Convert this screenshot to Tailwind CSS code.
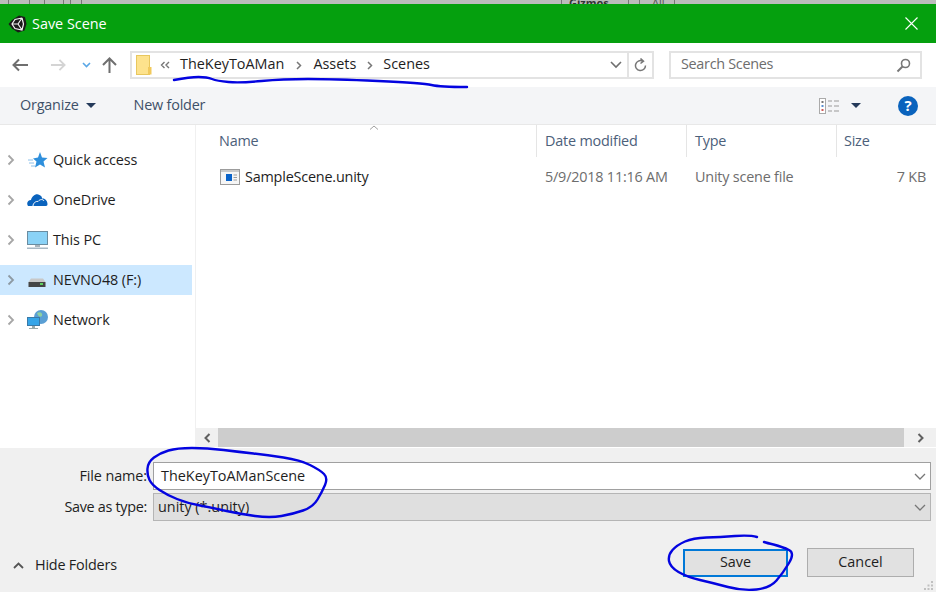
<!DOCTYPE html>
<html lang="en">
<head>
  <meta charset="UTF-8" />
  <title>Save Scene</title>
  <script src="https://cdn.jsdelivr.net/npm/@tailwindcss/browser@4"></script>
</head>
<body class="bg-white">
  <div class="relative w-[936px] h-[592px] overflow-hidden flex flex-col font-['Open_Sans',sans-serif] text-[14.4px] text-[#1e1e1e]">

    <!-- editor window peeking out above the dialog -->
    <div class="h-[4px] bg-[#bcbcbc] flex items-start overflow-hidden text-[11px] leading-[5px]">
      <div class="ml-[8px] w-[22px] h-[4px] border-x border-[#777]"></div>
      <div class="ml-[14px] w-[20px] h-[4px] border-x border-[#777]"></div>
      <div class="ml-[6px] w-[12px] h-[4px] border-x border-[#777]"></div>
      <div class="ml-[479px] w-[68px] h-[4px] border-x border-[#777] pl-[7px] font-bold text-[#333]">Gizmos</div>
      <div class="ml-[10px] w-[36px] h-[4px] border-x border-[#777] pl-[12px] text-[#555]">All</div>
    </div>

    <!-- title bar -->
    <div class="h-[39px] bg-[#05a00e] flex items-center pl-[8px] pr-[18px] text-white">
      <svg class="w-[19px] h-[18px]" viewBox="0 0 19 18">
        <path d="M11 0.5 L17 2 L18.5 9 L16.5 15.5 L10 17.5 L4 13.5 L0.5 9 L4 5 Z" fill="#1a1a1a"/>
        <path d="M4 9 H10 L14 3 M10 9 L14 15 M14 3 L15.5 9 L14 15 L7 13.5 L4 9 L7 4.5 L14 3" fill="none" stroke="#f2f2f2" stroke-width="1.2"/>
      </svg>
      <span class="ml-[5px]">Save Scene</span>
      <svg class="ml-auto w-[13px] h-[13px]" viewBox="0 0 13 13"><path d="M0.5 0.5 L12.5 12.5 M12.5 0.5 L0.5 12.5" stroke="#fff" stroke-width="1.1"/></svg>
    </div>

    <!-- address row -->
    <div class="h-[44px] bg-white flex items-center pl-[12px]">
      <svg class="w-[17px] h-[14px]" viewBox="0 0 17 14"><path d="M16 7 H2 M7 1.5 L1.5 7 L7 12.5" fill="none" stroke="#6f6f6f" stroke-width="2"/></svg>
      <svg class="ml-[21px] w-[16px] h-[14px]" viewBox="0 0 17 14"><path d="M1 7 H15 M10 1.5 L15.5 7 L10 12.5" fill="none" stroke="#d4d4d4" stroke-width="2"/></svg>
      <svg class="ml-[16px] w-[9px] h-[6px]" viewBox="0 0 9 6"><path d="M1 1 L4.5 4.5 L8 1" fill="none" stroke="#5aa7e6" stroke-width="1.6"/></svg>
      <svg class="ml-[11px] w-[15px] h-[16px]" viewBox="0 0 15 16"><path d="M7.5 16 V2 M1 8 L7.5 1.5 L14 8" fill="none" stroke="#6f6f6f" stroke-width="2"/></svg>
      <div class="ml-[13px] w-[524px] h-[28px] border-2 border-[#e3e3e3] flex items-center">
        <svg class="ml-[4px] w-[16px] h-[20px] shrink-0" viewBox="0 0 16 20">
          <rect x="0.5" y="0.5" width="13" height="19" fill="#fde28c" stroke="#e8c75e"/>
          <rect x="12" y="12" width="3.5" height="7.5" fill="#f1c95c"/>
        </svg>
        <svg class="ml-[8px] w-[10px] h-[8px]" viewBox="0 0 10 8"><path d="M4.5 1 L1.5 4 L4.5 7 M9 1 L6 4 L9 7" fill="none" stroke="#777" stroke-width="1.4"/></svg>
        <span class="ml-[10px] pb-[2px]">TheKeyToAMan</span>
        <svg class="ml-[12px] w-[6px] h-[9px]" viewBox="0 0 6 9"><path d="M1 1 L4.5 4.5 L1 8" fill="none" stroke="#777" stroke-width="1.5"/></svg>
        <span class="ml-[11px] pb-[2px]">Assets</span>
        <svg class="ml-[11px] w-[6px] h-[9px]" viewBox="0 0 6 9"><path d="M1 1 L4.5 4.5 L1 8" fill="none" stroke="#777" stroke-width="1.5"/></svg>
        <span class="ml-[10px] pb-[2px]">Scenes</span>
        <svg class="ml-auto w-[12px] h-[8px]" viewBox="0 0 12 8"><path d="M1 1 L6 6 L11 1" fill="none" stroke="#6f6f6f" stroke-width="1.6"/></svg>
        <div class="ml-[5px] w-[25px] h-full border-l-2 border-[#e3e3e3] flex items-center justify-center">
          <svg class="w-[13px] h-[14px]" viewBox="0 0 13 14"><path d="M8.5 3 A5 5 0 1 0 11.5 7.5 M6.5 0.5 L9.5 3.2 L6.5 5.5" fill="none" stroke="#777" stroke-width="1.5"/></svg>
        </div>
      </div>
      <div class="ml-[15px] w-[253px] h-[28px] border-2 border-[#e3e3e3] flex items-center pl-[10px] pr-[9px] text-[#6d6d6d] tracking-[-0.3px]">
        <span class="pb-[2px]">Search Scenes</span>
        <svg class="ml-auto w-[15px] h-[15px]" viewBox="0 0 15 15"><circle cx="9.5" cy="5.5" r="4" fill="none" stroke="#777" stroke-width="1.6"/><path d="M6.5 8.5 L1.5 13.5" stroke="#777" stroke-width="2"/></svg>
      </div>
    </div>

    <!-- toolbar -->
    <div class="h-[38px] bg-[#f4f5f7] border-b border-[#e8e8e8] flex items-center pl-[20px] pr-[18px] text-[#3e5068] tracking-[-0.2px]">
      <span class="pb-[2px]">Organize</span>
      <div class="ml-[7px] w-0 h-0 border-x-[5px] border-x-transparent border-t-[5px] border-t-[#243a5a]"></div>
      <span class="ml-[38px] pb-[2px]">New folder</span>
      <svg class="ml-auto w-[21px] h-[16px]" viewBox="0 0 21 16">
        <rect x="0.5" y="0.5" width="6" height="15" fill="#fff" stroke="#aaa"/>
        <rect x="2.5" y="3" width="2" height="2" fill="#777"/><rect x="2.5" y="7" width="2" height="2" fill="#5a8fd0"/><rect x="2.5" y="11" width="2" height="2" fill="#d05a5a"/>
        <path d="M9 3 H13 M15 3 H20 M9 8 H13 M15 8 H20 M9 13 H13 M15 13 H20" stroke="#999" stroke-width="1.2"/>
      </svg>
      <div class="ml-[11px] w-0 h-0 border-x-[5px] border-x-transparent border-t-[5px] border-t-[#243a5a]"></div>
      <div class="ml-[37px] w-[20px] h-[20px] rounded-full bg-[#0a63bd] text-white flex items-center justify-center text-[15px] font-bold leading-none">?</div>
    </div>

    <!-- main -->
    <div class="flex-1 flex bg-white min-h-0">
      <div class="w-[196px] shrink-0 border-r border-[#f0f0f0] pt-[15px] tracking-[-0.1px]">
        <div class="h-[40px] flex items-center pl-[7px]">
          <svg class="w-[8px] h-[12px]" viewBox="0 0 8 12"><path d="M1.5 1.5 L6 6 L1.5 10.5" fill="none" stroke="#a6a6a6" stroke-width="1.8"/></svg>
          <svg class="ml-[13px] w-[20px] h-[18px]" viewBox="0 0 20 18"><path d="M12 1 L14 6.5 L19.5 7 L15.5 10.5 L17 16.5 L12 13.5 L7 16.5 L8.5 10.5 L5 7.5 L10 6.5 Z" fill="#2e8fdc"/><path d="M0 9 H5 M1 12 H6 M3 15 H7" stroke="#8cc0ea" stroke-width="1"/></svg>
          <span class="ml-[5px]">Quick access</span>
        </div>
        <div class="h-[40px] flex items-center pl-[7px]">
          <svg class="w-[8px] h-[12px]" viewBox="0 0 8 12"><path d="M1.5 1.5 L6 6 L1.5 10.5" fill="none" stroke="#a6a6a6" stroke-width="1.8"/></svg>
          <svg class="ml-[12px] w-[21px] h-[14px]" viewBox="0 0 21 14"><path d="M1 13 C-1 10 1 7 4 7 C5 3 9 0 12.5 2 C14.5 3 15 4 15 5.5 C18 5 20.5 8 20.5 11 C20.5 12 20 13 19 13 Z" fill="#0a63bd"/><path d="M6 13 C6 10 9 8 11 8.5 C13 6 16 6 17 8" fill="none" stroke="#fff" stroke-width="1"/></svg>
          <span class="ml-[5px]">OneDrive</span>
        </div>
        <div class="h-[40px] flex items-center pl-[7px]">
          <svg class="w-[8px] h-[12px]" viewBox="0 0 8 12"><path d="M1.5 1.5 L6 6 L1.5 10.5" fill="none" stroke="#a6a6a6" stroke-width="1.8"/></svg>
          <svg class="ml-[12px] w-[21px] h-[19px]" viewBox="0 0 21 19"><rect x="0.5" y="0.5" width="20" height="13" fill="#8ad2f6" stroke="#6a8ca0"/><rect x="8" y="14" width="5" height="2" fill="#a8b4bc"/><rect x="0" y="16.5" width="21" height="1.5" fill="#a8b8c4"/></svg>
          <span class="ml-[5px]">This PC</span>
        </div>
        <div class="h-[30px] my-[5px] bg-[#cce8ff] w-[192px] flex items-center pl-[7px]">
          <svg class="w-[8px] h-[12px]" viewBox="0 0 8 12"><path d="M1.5 1.5 L6 6 L1.5 10.5" fill="none" stroke="#8d9aa3" stroke-width="1.8"/></svg>
          <svg class="ml-[13px] w-[18px] h-[9px] mt-[5px]" viewBox="0 0 18 9"><path d="M3 0.5 H15 L17.5 4 H0.5 Z" fill="#c8c8c8"/><rect x="0.5" y="4" width="17" height="5" fill="#454545"/><rect x="12" y="5" width="3" height="2" fill="#5fd05f"/></svg>
          <span class="ml-[7px]">NEVNO48 (F:)</span>
        </div>
        <div class="h-[40px] flex items-center pl-[7px]">
          <svg class="w-[8px] h-[12px]" viewBox="0 0 8 12"><path d="M1.5 1.5 L6 6 L1.5 10.5" fill="none" stroke="#a6a6a6" stroke-width="1.8"/></svg>
          <svg class="ml-[12px] w-[21px] h-[20px]" viewBox="0 0 21 20"><circle cx="14" cy="7" r="7" fill="#5a9fd4"/><path d="M10 3 C13 1 16 3 15 6 C13 8 11 6 10 3 Z" fill="#8fd0a0"/><rect x="0.5" y="7.5" width="12" height="8" fill="#35a5e8" stroke="#3a7aa8"/><rect x="5" y="16" width="3" height="2" fill="#9aa"/><rect x="2" y="18" width="9" height="1" fill="#9aa"/></svg>
          <span class="ml-[5px]">Network</span>
        </div>
      </div>

      <div class="flex-1 min-w-0 flex flex-col tracking-[-0.2px]">
        <div class="relative h-[32px] shrink-0 flex items-center text-[#4c607a]">
          <div class="w-[341px] h-full pl-[23px] pt-[5px] border-r border-[#e5e5e5]">Name</div>
          <div class="w-[150px] h-full pl-[8px] pt-[5px] border-r border-[#e5e5e5]">Date modified</div>
          <div class="w-[150px] h-full pl-[8px] pt-[5px] border-r border-[#e5e5e5]">Type</div>
          <div class="flex-1 h-full pl-[7px] pt-[5px]">Size</div>
          <svg class="absolute left-[173px] top-0 w-[10px] h-[5px]" viewBox="0 0 10 5"><path d="M1 4.5 L5 1 L9 4.5" fill="none" stroke="#a0a0a0"/></svg>
        </div>
        <div class="h-[40px] shrink-0 flex items-center">
          <div class="w-[341px] flex items-center pl-[24px]">
            <svg class="w-[20px] h-[16px]" viewBox="0 0 20 16"><rect x="0.5" y="0.5" width="19" height="15" fill="#f6f6f6" stroke="#9c9c9c"/><rect x="1" y="1" width="18" height="2" fill="#c9c9c9"/><rect x="6" y="5" width="6" height="7" fill="#0a63c9"/><path d="M13.5 6 H17 M13.5 8.5 H17 M13.5 11 H17" stroke="#9c9c9c"/></svg>
            <span class="ml-[5px]">SampleScene.unity</span>
          </div>
          <div class="w-[150px] pl-[8px] text-[#6d6d6d]">5/9/2018 11:16 AM</div>
          <div class="w-[149px] pl-[8px] text-[#6d6d6d]">Unity scene file</div>
          <div class="flex-1 pr-[10px] text-right text-[#6d6d6d]">7 KB</div>
        </div>
        <div class="flex-1"></div>
        <div class="h-[19px] mb-[1px] shrink-0 flex items-center bg-[#f0f0f0]">
          <div class="w-[22px] h-full flex items-center justify-center">
            <svg class="w-[7px] h-[10px]" viewBox="0 0 7 10"><path d="M5.5 1 L1.5 5 L5.5 9" fill="none" stroke="#606060" stroke-width="2"/></svg>
          </div>
          <div class="w-[686px] h-full bg-[#cdcdcd]"></div>
          <div class="flex-1 h-full flex items-center justify-center">
            <svg class="w-[7px] h-[10px]" viewBox="0 0 7 10"><path d="M1.5 1 L5.5 5 L1.5 9" fill="none" stroke="#606060" stroke-width="2"/></svg>
          </div>
        </div>
      </div>
    </div>

    <!-- bottom form -->
    <div class="relative h-[144px] shrink-0 bg-[#f0f0f0] pt-[14px]">
      <div class="flex items-center h-[28px]">
        <div class="w-[147px] text-right tracking-[-0.1px]">File name:</div>
        <div class="ml-[6px] w-[778px] h-[28px] bg-white border border-[#a0a0a0] flex items-center pl-[7px] pr-[4px]">
          <span>TheKeyToAManScene</span>
          <svg class="ml-auto w-[12px] h-[7px]" viewBox="0 0 12 7"><path d="M1 1 L6 6 L11 1" fill="none" stroke="#777" stroke-width="1.3"/></svg>
        </div>
      </div>
      <div class="flex items-center h-[28px] mt-[3px]">
        <div class="w-[147px] text-right tracking-[-0.3px]">Save as type:</div>
        <div class="ml-[6px] w-[778px] h-[28px] bg-[#dfdfdf] border border-[#b5b5b5] flex items-center pl-[4px] pr-[4px]">
          <span>unity (*.unity)</span>
          <svg class="ml-auto w-[12px] h-[7px]" viewBox="0 0 12 7"><path d="M1 1 L6 6 L11 1" fill="none" stroke="#777" stroke-width="1.3"/></svg>
        </div>
      </div>
      <div class="flex items-center mt-[27px] h-[29px] pl-[13px]">
        <svg class="w-[11px] h-[7px] mt-[6px]" viewBox="0 0 11 7"><path d="M1 6 L5.5 1.5 L10 6" fill="none" stroke="#555" stroke-width="1.8"/></svg>
        <span class="ml-[11px] mt-[5px] tracking-[-0.2px]">Hide Folders</span>
        <div class="ml-auto w-[105px] h-[28px] pb-[2px] bg-[#e1e1e1] border-2 border-[#0078d7] flex items-center justify-center">Save</div>
        <div class="ml-[19px] mr-[22px] w-[107px] h-[29px] pb-[2px] bg-[#e1e1e1] border border-[#adadad] flex items-center justify-center">Cancel</div>
      </div>
      <svg class="absolute right-[2px] bottom-[2px] w-[10px] h-[9px]" viewBox="0 0 10 9" fill="#c0c0c0"><rect x="7" y="0" width="2" height="2"/><rect x="3.5" y="3.5" width="2" height="2"/><rect x="7" y="3.5" width="2" height="2"/><rect x="0" y="7" width="2" height="2"/><rect x="3.5" y="7" width="2" height="2"/><rect x="7" y="7" width="2" height="2"/></svg>
    </div>

    <!-- hand drawn marks over the screenshot -->
    <svg class="absolute inset-0 w-[936px] h-[592px] pointer-events-none" viewBox="0 0 936 592" fill="none" stroke="#0404e0" stroke-width="2.4" stroke-linejoin="round" stroke-linecap="round">
      <path d="M174 80 Q190 77 198.5 77 Q207 77 212 79 Q217 81 228.5 82 Q240 83 261.5 81 Q283 79 308 79 Q333 79 378 81 Q423 83 431.5 85 Q440 87 467 87"/>
      <path d="M192 448 Q177 448 168.5 450.5 Q160 453 154 457.5 Q148 462 147.5 468.5 Q147 475 149.5 480 Q152 485 159.5 490 Q167 495 177 499 Q187 503 200 505.5 Q213 508 226.5 511 Q240 514 255 516 Q270 518 281.5 516 Q293 514 303 510.5 Q313 507 317.5 499.5 Q322 492 325 485 Q328 478 324 474 Q320 470 310 465 Q300 460 283.5 457.5 Q267 455 253.5 453.5 Q240 452 223.5 450 Q207 448 192 448 Z"/>
      <path d="M757 537 Q750 535 735 536 Q720 537 706.5 537.5 Q693 538 685 541.5 Q677 545 672.5 550 Q668 555 669 561 Q670 567 678.5 572 Q687 577 700 580 Q713 583 728 587 Q743 591 756.5 589.5 Q770 588 776.5 580.5 Q783 573 789 563 Q795 553 789 550 Q783 547 773.5 544.5 Q767 543 764 542"/>
    </svg>
  </div>
</body>
</html>
